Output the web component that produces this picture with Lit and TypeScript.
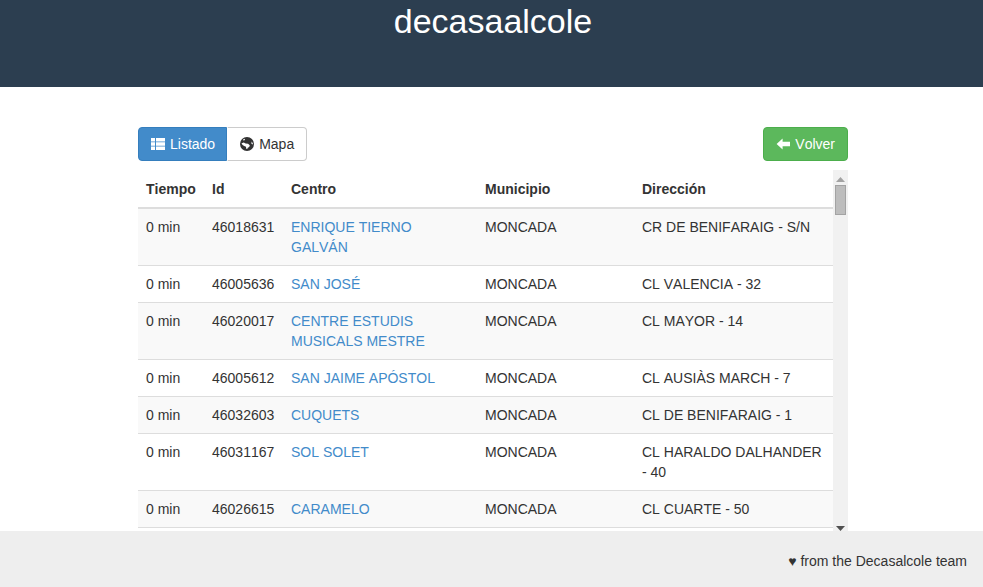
import { LitElement, html, css, svg } from "lit";
import { customElement } from "lit/decorators.js";

interface School { id: string; name: string; city: string; address: string }

const SCHOOLS: School[] = [
  { id: "46018631", name: "ENRIQUE TIERNO GALVÁN", city: "MONCADA", address: "CR DE BENIFARAIG - S/N" },
  { id: "46005636", name: "SAN JOSÉ", city: "MONCADA", address: "CL VALENCIA - 32" },
  { id: "46020017", name: "CENTRE ESTUDIS MUSICALS MESTRE", city: "MONCADA", address: "CL MAYOR - 14" },
  { id: "46005612", name: "SAN JAIME APÓSTOL", city: "MONCADA", address: "CL AUSIÀS MARCH - 7" },
  { id: "46032603", name: "CUQUETS", city: "MONCADA", address: "CL DE BENIFARAIG - 1" },
  { id: "46031167", name: "SOL SOLET", city: "MONCADA", address: "CL HARALDO DALHANDER - 40" },
  { id: "46026615", name: "CARAMELO", city: "MONCADA", address: "CL CUARTE - 50" },
];

@customElement("app-root")
export class AppRoot extends LitElement {
  static styles = css`
    :host {
      display: block;
      font-family: "Liberation Sans", Arial, sans-serif;
      font-size: 14px;
      line-height: 20px;
      color: #333;
      font-kerning: none;
    }
    .head {
      background: #2c3e50;
      height: 87px;
      padding-left: 3px;
      text-align: center;
      color: #fff;
    }
    .head h1 {
      margin: 0;
      padding-top: 1px;
      font-size: 34px;
      font-weight: 400;
      line-height: 40px;
    }
    .main {
      width: 710px;
      margin-left: 138px;
      padding-top: 40px;
    }
    .bar {
      display: flex;
      justify-content: space-between;
      margin-bottom: 9px;
    }
    .group { display: flex; }
    .btn {
      display: inline-flex;
      align-items: center;
      gap: 5px;
      box-sizing: border-box;
      height: 34px;
      padding: 0 12px;
      border: 1px solid #ccc;
      border-radius: 4px;
      background: #fff;
      color: #333;
      font: inherit;
      font-kerning: none;
    }
    .btn svg { width: 14px; height: 14px; flex: none; fill: currentColor; }
    .left { border-radius: 4px 0 0 4px; padding-right: 11px; }
    .right { border-radius: 0 4px 4px 0; border-left-color: #fff; }
    .primary { background: #428bca; border-color: #357ebd; color: #fff; }
    .success { background: #5cb85c; border-color: #4cae4c; color: #fff; }
    .scroll {
      display: flex;
      height: 364px;
    }
    .pane { flex: 1; min-width: 0; }
    .rail {
      flex: none;
      display: flex;
      flex-direction: column;
      width: 15px;
      background: #f1f1f1;
    }
    .arrow {
      box-sizing: border-box;
      height: 15px;
      padding-top: 7px;
      text-align: center;
      line-height: 0;
    }
    .arrow svg { width: 9px; height: 5px; }
    .up { fill: #a3a3a3; }
    .down { margin-top: auto; fill: #505050; }
    .thumb {
      box-sizing: border-box;
      height: 30px;
      margin: 0 2px;
      background: #bdbdbd;
      border: 1px solid #a3a3a3;
    }
    table {
      width: 100%;
      border-collapse: collapse;
      table-layout: fixed;
    }
    th, td {
      padding: 8px;
      text-align: left;
      vertical-align: top;
    }
    th {
      padding: 9px 8px 7px;
      font-weight: 700;
      border-bottom: 2px solid #ddd;
      height: 21px;
    }
    td { border-bottom: 1px solid #ddd; }
    tbody tr:nth-child(odd) td { background: #f9f9f9; }
    a { color: #428bca; text-decoration: none; }
    .c1 { width: 50px; }
    .c2 { width: 63px; }
    .c3 { width: 178px; }
    .c4 { width: 141px; }
    footer {
      position: fixed;
      left: 0;
      right: 0;
      bottom: 0;
      height: 56px;
      box-sizing: border-box;
      padding: 20px 16px 0;
      background: #eee;
      text-align: right;
    }
  `;

  private icon(body: unknown) {
    return html`<svg viewBox="0 0 14 14" aria-hidden="true">${body}</svg>`;
  }

  render() {
    return html`
      <header class="head"><h1>decasaalcole</h1></header>
      <main class="main">
        <div class="bar">
          <div class="group">
            <button class="btn left primary">
              ${this.icon(svg`<path d="M0 1h4v3.4H0zM5 1h9v3.4H5zM0 5.3h4v3.4H0zM5 5.3h9v3.4H5zM0 9.6h4V13H0zM5 9.6h9V13H5z"/>`)}
              Listado
            </button>
            <button class="btn right">
              ${this.icon(svg`<path fill-rule="evenodd" d="M7 0a7 7 0 1 0 0 14A7 7 0 0 0 7 0zM3 2.6l1.6-.8.4 1-1.2 1zM1.6 6.2l2.2-.6 1.8 1 2.4.2 1.8 1.4-.6 1.8-1.4.8-.6 1.2-1-.2-.2-2-1.8-.8-1.6-1-1-1.4zM11.6 4.4l1.2 1.8.1 1.2-1.5-.6z"/>`)}
              Mapa
            </button>
          </div>
          <button class="btn success">
            ${this.icon(svg`<path d="M6.6 1.4 0.6 7l6 5.6V9.2H14V4.8H6.6z"/>`)}
            Volver
          </button>
        </div>
        <div class="scroll">
          <div class="pane">
            <table>
              <thead>
                <tr>
                  <th class="c1">Tiempo</th>
                  <th class="c2">Id</th>
                  <th class="c3">Centro</th>
                  <th class="c4">Municipio</th>
                  <th>Dirección</th>
                </tr>
              </thead>
              <tbody>
                ${SCHOOLS.map(
                  (s) => html`<tr>
                    <td>0 min</td>
                    <td>${s.id}</td>
                    <td><a href="#">${s.name}</a></td>
                    <td>${s.city}</td>
                    <td>${s.address}</td>
                  </tr>`
                )}
              </tbody>
            </table>
          </div>
          <div class="rail" aria-hidden="true">
            <div class="arrow up"><svg viewBox="0 0 9 5"><path d="M0 5h9L4.5 0z"/></svg></div>
            <div class="thumb"></div>
            <div class="arrow down"><svg viewBox="0 0 9 5"><path d="M0 0h9L4.5 5z"/></svg></div>
          </div>
        </div>
      </main>
      <footer>♥ from the Decasalcole team</footer>
    `;
  }
}
